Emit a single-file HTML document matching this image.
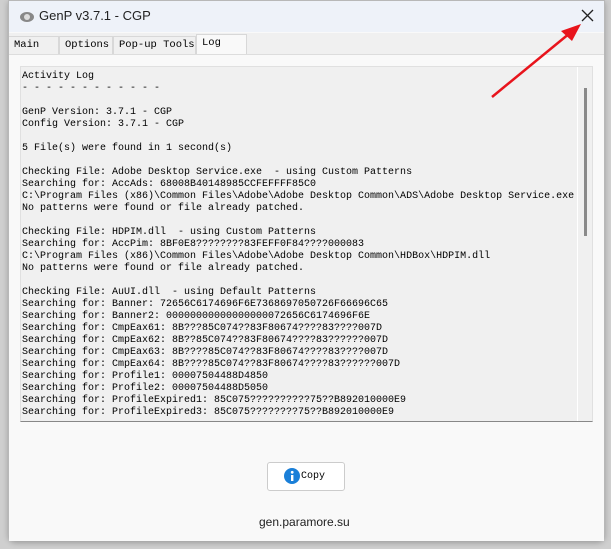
<!DOCTYPE html>
<html><head><style>
body{margin:0;width:611px;height:549px;background:#cfcfcf;position:relative;overflow:hidden;font-family:"Liberation Sans",sans-serif}
.win{position:absolute;left:8px;top:0;width:595px;height:539px;background:#f9f9f9;border:1px solid #b8b8b8;border-radius:0 0 8px 8px;box-shadow:0 2px 6px rgba(0,0,0,.25)}
.title{position:absolute;left:0;top:0;width:595px;height:31px;background:#eef2f9}
.title span{position:absolute;left:30px;top:7px;font-size:13px;color:#222}
.tabs{position:absolute;left:0;top:32px;width:595px;height:21px;background:#f0f0f0}
.tab{position:absolute;top:3px;height:18px;border:1px solid #d8d8d8;border-bottom:none;font:10.5px "Liberation Mono",monospace;color:#000;line-height:17px;padding-left:5px;box-sizing:border-box;background:#f0f0f0;white-space:nowrap;overflow:hidden}
.panel{position:absolute;left:0;top:53px;width:595px;height:486px;background:#f9f9f9;border-top:1px solid #ddd}
.log{position:absolute;left:11px;top:11px;width:573px;height:356px;background:#f0f0f0;border:1px solid #e0e0e0;border-bottom:1px solid #888;box-sizing:border-box}
pre{margin:0;position:absolute;left:1px;top:4px;font:10px/12px "Liberation Mono",monospace;color:#000}
.sb{position:absolute;left:556px;top:0;width:1px;height:354px;background:#fff}
.th{position:absolute;left:563px;top:21px;width:3px;height:148px;background:#8a8a8a}
.btn{position:absolute;left:258px;top:461px;width:76px;height:27px;background:#fff;border:1px solid #ccc;border-radius:3px;font:10px "Liberation Mono",monospace}
.foot{position:absolute;left:250px;top:514px;font-size:12px;color:#222}
</style></head><body>
<div class="win">
<div class="title"><svg style="position:absolute;left:10px;top:8px" width="16" height="14"><ellipse cx="8" cy="8" rx="7" ry="5" fill="#888"/><circle cx="8" cy="8" r="3" fill="#ddd"/></svg><span>GenP v3.7.1 - CGP</span>
<svg style="position:absolute;left:572px;top:8px" width="13" height="13"><path d="M1 1L12 12M12 1L1 12" stroke="#222" stroke-width="1.3"/></svg></div>
<div class="tabs">
<div class="tab" style="left:0;width:50px;border-left:none">Main</div>
<div class="tab" style="left:50px;width:54px">Options</div>
<div class="tab" style="left:104px;width:83px">Pop-up Tools</div>
<div class="tab" style="left:187px;width:51px;top:1px;height:21px;background:#f9f9f9">Log</div>
</div>
<div class="panel">
<div class="log"><pre>Activity Log
- - - - - - - - - - - -

GenP Version: 3.7.1 - CGP
Config Version: 3.7.1 - CGP

5 File(s) were found in 1 second(s)

Checking File: Adobe Desktop Service.exe  - using Custom Patterns
Searching for: AccAds: 68008B40148985CCFEFFFF85C0
C:\Program Files (x86)\Common Files\Adobe\Adobe Desktop Common\ADS\Adobe Desktop Service.exe
No patterns were found or file already patched.

Checking File: HDPIM.dll  - using Custom Patterns
Searching for: AccPim: 8BF0E8????????83FEFF0F84????000083
C:\Program Files (x86)\Common Files\Adobe\Adobe Desktop Common\HDBox\HDPIM.dll
No patterns were found or file already patched.

Checking File: AuUI.dll  - using Default Patterns
Searching for: Banner: 72656C6174696F6E7368697050726F66696C65
Searching for: Banner2: 00000000000000000072656C6174696F6E
Searching for: CmpEax61: 8B???85C074??83F80674????83????007D
Searching for: CmpEax62: 8B??85C074??83F80674????83??????007D
Searching for: CmpEax63: 8B????85C074??83F80674????83????007D
Searching for: CmpEax64: 8B????85C074??83F80674????83??????007D
Searching for: Profile1: 00007504488D4850
Searching for: Profile2: 00007504488D5050
Searching for: ProfileExpired1: 85C075??????????75??B892010000E9
Searching for: ProfileExpired3: 85C075????????75??B892010000E9</pre>
<div class="sb"></div><div class="th"></div></div>
</div>
<div class="btn"><svg style="position:absolute;left:16px;top:5px" width="16" height="16"><circle cx="8" cy="8" r="8" fill="#1a7fd8"/><rect x="7" y="7" width="2.4" height="6" fill="#fff"/><circle cx="8.2" cy="4.3" r="1.4" fill="#fff"/></svg><span style="position:absolute;left:33px;top:8px">Copy</span></div>
<div class="foot">gen.paramore.su</div>
</div>
<svg style="position:absolute;left:0;top:0" width="611" height="549"><path d="M492 97L570 33" stroke="#e8141c" stroke-width="2.5"/><path d="M581 24L561 31L572 41Z" fill="#e8141c"/></svg>
</body></html>
